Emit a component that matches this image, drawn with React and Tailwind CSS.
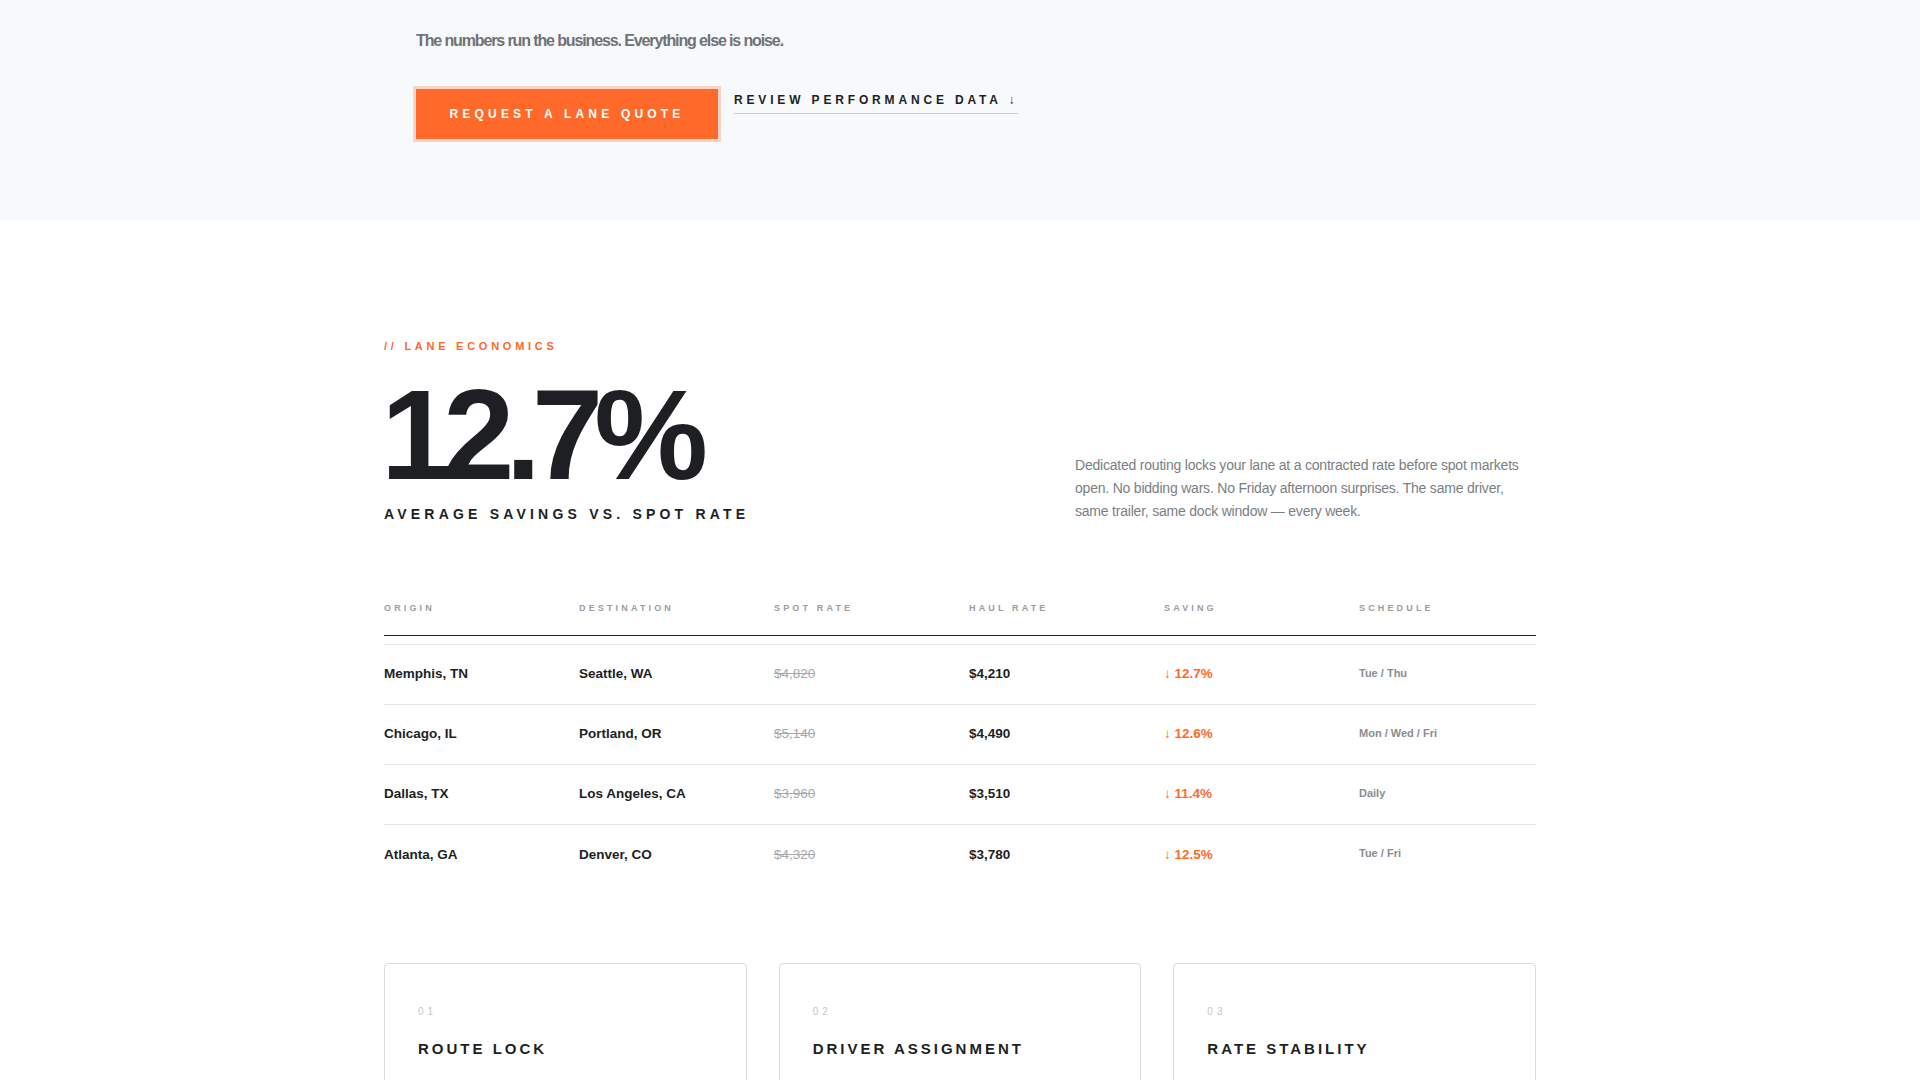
const rows = [
  { origin: 'Memphis, TN', dest: 'Seattle, WA', spot: '$4,820', haul: '$4,210', saving: '12.7%', schedule: 'Tue / Thu' },
  { origin: 'Chicago, IL', dest: 'Portland, OR', spot: '$5,140', haul: '$4,490', saving: '12.6%', schedule: 'Mon / Wed / Fri' },
  { origin: 'Dallas, TX', dest: 'Los Angeles, CA', spot: '$3,960', haul: '$3,510', saving: '11.4%', schedule: 'Daily' },
  { origin: 'Atlanta, GA', dest: 'Denver, CO', spot: '$4,320', haul: '$3,780', saving: '12.5%', schedule: 'Tue / Fri' },
];

const cards = [
  { n: '01', title: 'ROUTE LOCK' },
  { n: '02', title: 'DRIVER ASSIGNMENT' },
  { n: '03', title: 'RATE STABILITY' },
];

const cols = 'grid grid-cols-[195px_195px_195px_195px_195px_1fr]';

const App = () => {
  return (
    <div className="min-h-screen bg-white text-[#1d1f23]" style={{ fontFamily: '"Liberation Sans", Arial, sans-serif' }}>
      <section className="bg-[#f8f9fb] h-[220px]">
        <div className="w-[1088px] mx-auto pt-[29px]">
          <p className="text-[16px] font-bold text-[#6f7277] tracking-[-0.07em]">The numbers run the business. Everything else is noise.</p>
          <div className="flex items-start gap-4 mt-[36px]">
            <button className="w-[302px] h-[50px] bg-[#ff6a2b] text-white text-[12px] font-bold tracking-[0.35em] shadow-[0_0_0_3px_rgba(255,106,43,0.25)]">
              REQUEST A LANE QUOTE
            </button>
            <a className="mt-[2px] pb-[4px] border-b border-[#c9ccd1] text-[12px] font-bold tracking-[0.32em] text-[#1d1f23]">REVIEW PERFORMANCE DATA ↓</a>
          </div>
        </div>
      </section>

      <section className="w-[1152px] mx-auto pt-[118px]">
        <p className="text-[11px] font-bold tracking-[0.34em] text-[#ff6a2b]">// LANE ECONOMICS</p>
        <div className="flex justify-between items-end mt-[16px]">
          <div>
            <h1 className="text-[128px] font-bold leading-[1] tracking-[-0.07em] -ml-[3px]">12.7%</h1>
            <p className="mt-[5px] text-[14px] font-bold tracking-[0.3em]">AVERAGE SAVINGS VS. SPOT RATE</p>
          </div>
          <p className="w-[461px] text-[14px] leading-[23px] text-[#7b7e83] tracking-[-0.015em] mb-[2px]">
            Dedicated routing locks your lane at a contracted rate before spot markets open. No bidding wars. No Friday afternoon surprises. The same driver, same trailer, same dock window — every week.
          </p>
        </div>

        <div className="mt-[77px]">
          <div className={`${cols} pb-[20px] border-b border-[#1d1f23] text-[9px] font-bold tracking-[0.35em] text-[#9a9da2]`}>
            <div>ORIGIN</div><div>DESTINATION</div><div>SPOT RATE</div><div>HAUL RATE</div><div>SAVING</div><div>SCHEDULE</div>
          </div>
          <div className="mt-[8px] border-t border-[#e3e5e8]">
            {rows.map((r, i) => (
              <div key={i} className={`${cols} items-center h-[60px] text-[13.5px] font-bold ${i < rows.length - 1 ? 'border-b border-[#e3e5e8]' : ''}`}>
                <div>{r.origin}</div>
                <div>{r.dest}</div>
                <div className="text-[#a5a8ad] font-normal line-through">{r.spot}</div>
                <div>{r.haul}</div>
                <div className="text-[#ff6a2b]">↓ {r.saving}</div>
                <div className="text-[11px] text-[#8a8d92] -mt-[3px]">{r.schedule}</div>
              </div>
            ))}
          </div>
        </div>

        <div className="grid grid-cols-3 gap-[32px] mt-[78px]">
          {cards.map((c) => (
            <div key={c.n} className="border border-[#d9dbde] rounded-[4px] px-[33px] pt-[40px] h-[200px]">
              <p className="text-[10px] tracking-[0.4em] text-[#c3c5c9]">{c.n}</p>
              <h3 className="mt-[19px] text-[15px] font-bold tracking-[0.2em]">{c.title}</h3>
            </div>
          ))}
        </div>
      </section>
    </div>
  );
};

export default App;
